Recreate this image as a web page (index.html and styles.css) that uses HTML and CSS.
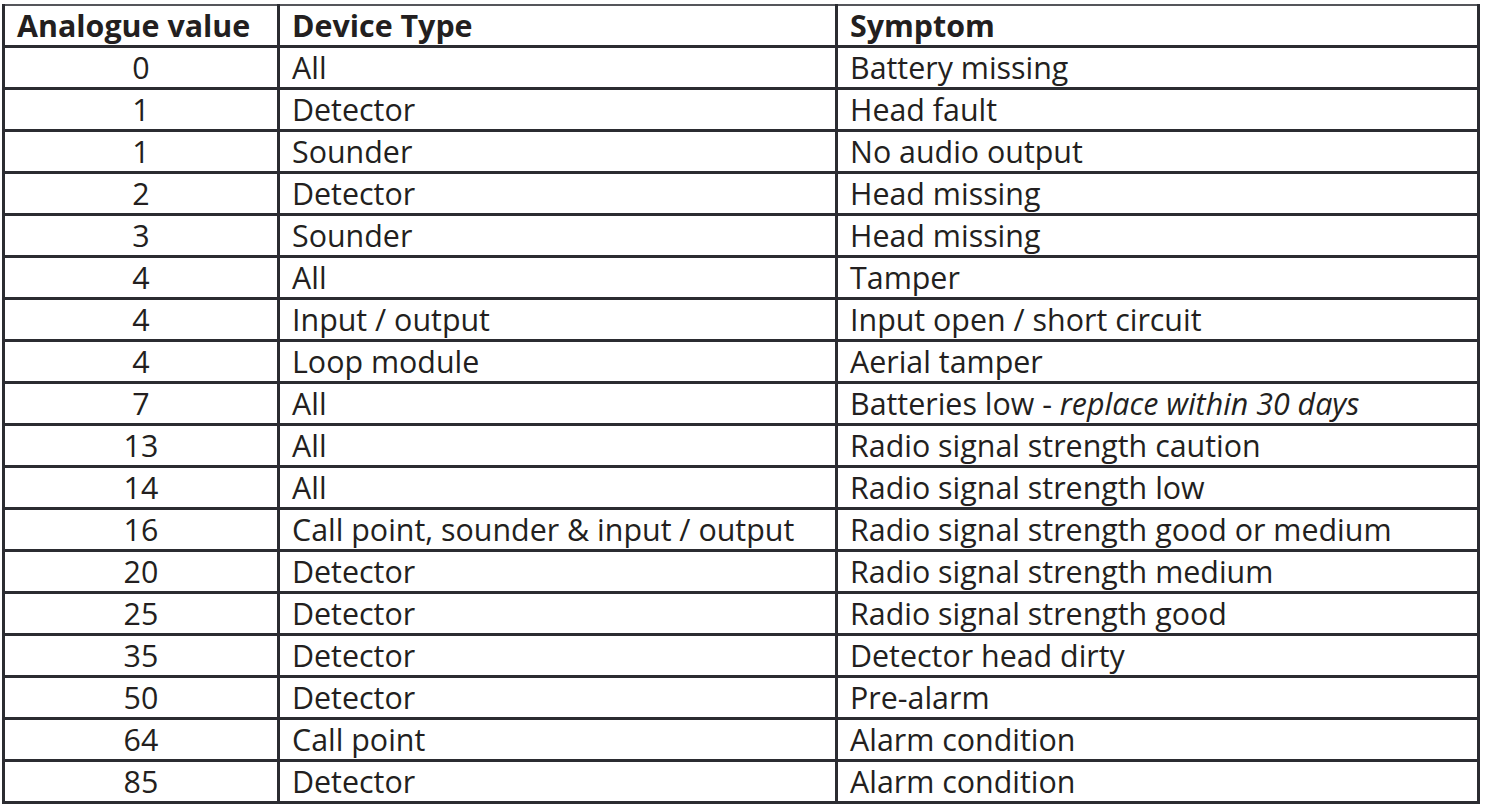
FILE: index.html
```html
<!DOCTYPE html>
<html>
<head>
<meta charset="utf-8">
<link rel="stylesheet" href="styles.css">
</head>
<body>
<table class="faults">
  <colgroup>
    <col class="c1"><col class="c2"><col class="c3">
  </colgroup>
  <thead>
    <tr><th>Analogue value</th><th>Device Type</th><th>Symptom</th></tr>
  </thead>
  <tbody>
    <tr><td class="num">0</td><td>All</td><td>Battery missing</td></tr>
    <tr><td class="num">1</td><td>Detector</td><td>Head fault</td></tr>
    <tr><td class="num">1</td><td>Sounder</td><td>No audio output</td></tr>
    <tr><td class="num">2</td><td>Detector</td><td>Head missing</td></tr>
    <tr><td class="num">3</td><td>Sounder</td><td>Head missing</td></tr>
    <tr><td class="num">4</td><td>All</td><td>Tamper</td></tr>
    <tr><td class="num">4</td><td>Input / output</td><td>Input open / short circuit</td></tr>
    <tr><td class="num">4</td><td>Loop module</td><td>Aerial tamper</td></tr>
    <tr><td class="num">7</td><td>All</td><td>Batteries low - <em>replace within 30 days</em></td></tr>
    <tr><td class="num">13</td><td>All</td><td>Radio signal strength caution</td></tr>
    <tr><td class="num">14</td><td>All</td><td>Radio signal strength low</td></tr>
    <tr><td class="num">16</td><td>Call point, sounder &amp; input / output</td><td>Radio signal strength good or medium</td></tr>
    <tr><td class="num">20</td><td>Detector</td><td>Radio signal strength medium</td></tr>
    <tr><td class="num">25</td><td>Detector</td><td>Radio signal strength good</td></tr>
    <tr><td class="num">35</td><td>Detector</td><td>Detector head dirty</td></tr>
    <tr><td class="num">50</td><td>Detector</td><td>Pre-alarm</td></tr>
    <tr><td class="num">64</td><td>Call point</td><td>Alarm condition</td></tr>
    <tr><td class="num">85</td><td>Detector</td><td>Alarm condition</td></tr>
  </tbody>
</table>
</body>
</html>
```
FILE: styles.css
```css
html, body {
  margin: 0;
  padding: 0;
  background: #ffffff;
}
body {
  padding: 4px 0 0 2px;
  font-family: "Open Sans", "Liberation Sans", sans-serif;
  color: #231f20;
}
.faults {
  border-collapse: collapse;
  width: 1478px;
  table-layout: fixed;
  font-size: 30.4px;
  line-height: 30px;
}
.c1 { width: 275px; }
.c2 { width: 558px; }
.c3 { width: auto; }
.faults th,
.faults td {
  border: 3px solid #2b2c31;
  height: 38px;
  padding: 1px 12px 0;
  text-align: left;
  vertical-align: middle;
  white-space: nowrap;
}
.faults th {
  font-weight: 700;
}
.faults thead th {
  border-top-width: 2px;
  border-top-color: #55565b;
}
.faults .num {
  text-align: center;
}
.faults em {
  font-style: italic;
}
```
